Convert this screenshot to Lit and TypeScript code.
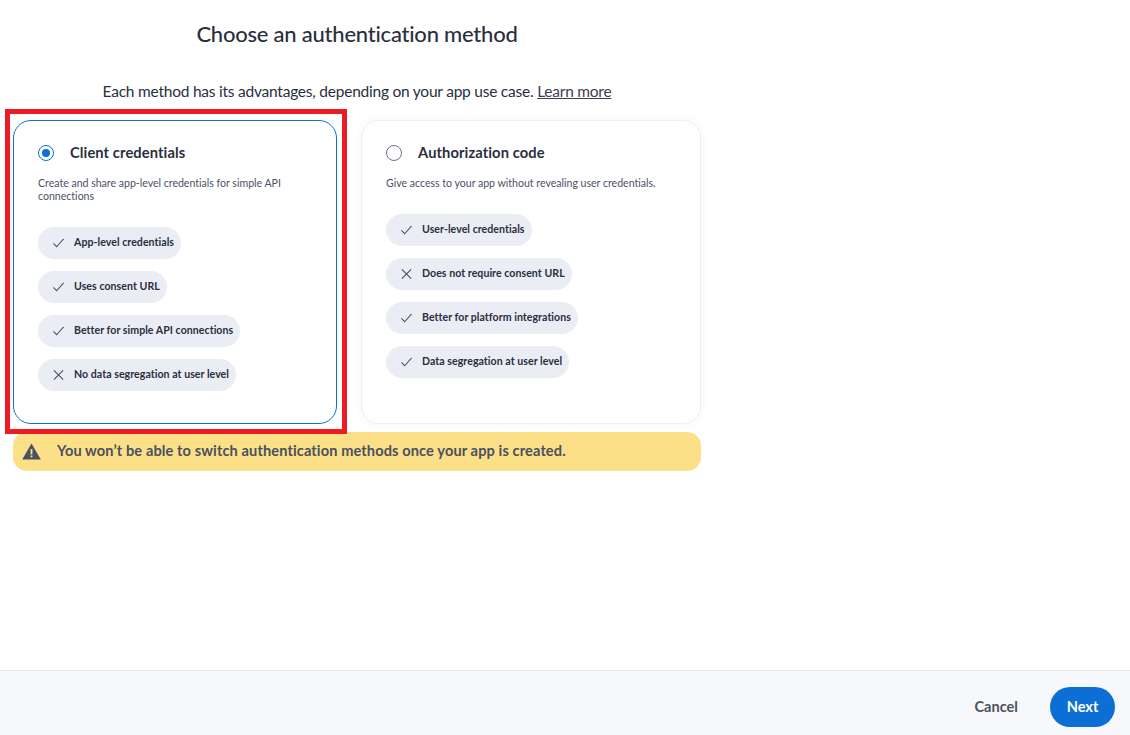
import { LitElement, html, css, svg } from "lit";
import { customElement } from "lit/decorators.js";

type Item = { ok: boolean; text: string };

const check = svg`<path d="M1.5 7.5 L5 11 L12.5 2.5" fill="none" stroke="#4a5163" stroke-width="1.1"/>`;
const cross = svg`<path d="M2 2 L12 12 M12 2 L2 12" fill="none" stroke="#4a5163" stroke-width="1.2"/>`;

@customElement("app-root")
export class AppRoot extends LitElement {
  static styles = css`
    :host {
      display: flex;
      flex-direction: column;
      height: 735px;
      width: 1130px;
      overflow: hidden;
      background: #fff;
      font-family: Lato, "Open Sans", sans-serif;
      color: #2a2f3d;
    }
    .main {
      flex: 1;
      padding-left: 13px;
    }
    .content {
      position: relative;
      width: 688px;
      display: flex;
      flex-direction: column;
    }
    h1 {
      margin: 0;
      padding-top: 20px;
      height: 28px;
      line-height: 28px;
      font-size: 22px;
      font-weight: 500;
      letter-spacing: -0.23px;
      text-align: center;
      color: #2a2f3d;
    }
    .sub {
      margin: 29px 0 0;
      height: 28px;
      line-height: 28px;
      font-size: 15.5px;
      letter-spacing: -0.23px;
      text-align: center;
      color: #2a2f3d;
    }
    .sub a {
      color: #3a4050;
      text-decoration: underline;
    }
    .cards {
      display: flex;
      gap: 24px;
      margin-top: 15px;
    }
    .card {
      box-sizing: border-box;
      height: 304px;
      border-radius: 18px;
      border: 1px solid #eeeef6;
      box-shadow: 0 0 12px rgba(90, 90, 140, 0.05);
      padding: 23px 24px;
      background: #fff;
    }
    .card.left {
      width: 324px;
      border-color: #0b6fd6;
    }
    .card.right {
      width: 340px;
    }
    .head {
      display: flex;
      align-items: center;
      gap: 16px;
      height: 18px;
    }
    .radio {
      box-sizing: border-box;
      width: 16px;
      height: 16px;
      border-radius: 50%;
      border: 1.3px solid #6b7488;
      display: flex;
      align-items: center;
      justify-content: center;
      flex: none;
    }
    .radio.on {
      border-color: #0b6fd6;
    }
    .radio.on::after {
      content: "";
      width: 8px;
      height: 8px;
      border-radius: 50%;
      background: #0b6fd6;
    }
    .name {
      font-size: 14.7px;
      font-weight: 700;
      letter-spacing: 0.1px;
      padding-bottom: 2px;
      color: #2a2f3d;
    }
    .desc {
      margin: 15px 0 0;
      font-size: 10.6px;
      line-height: 13px;
      letter-spacing: -0.02px;
      color: #4c5264;
    }
    .pills {
      display: flex;
      flex-direction: column;
      align-items: flex-start;
      gap: 12px;
      margin-top: 24px;
    }
    .pill {
      display: flex;
      align-items: center;
      gap: 9px;
      height: 32px;
      padding: 0 7px 0 14px;
      border-radius: 16px;
      background: #ebedf5;
      font-size: 10.6px;
      font-weight: 700;
      letter-spacing: 0.04px;
      color: #2a2f3d;
    }
    .pill span {
      padding-bottom: 2px;
    }
    .pill svg {
      width: 13px;
      height: 14px;
      flex: none;
    }
    .banner {
      display: flex;
      align-items: center;
      gap: 16px;
      height: 39px;
      margin-top: 8px;
      padding-left: 9px;
      border-radius: 14px;
      background: #fbe088;
      font-size: 14.6px;
      font-weight: 700;
      letter-spacing: 0.11px;
      color: #4b5060;
    }
    .banner span {
      padding-bottom: 2px;
    }
    .banner svg {
      width: 19px;
      height: 17px;
      flex: none;
    }
    .highlight {
      position: absolute;
      left: -8px;
      top: 109px;
      width: 342px;
      height: 325px;
      box-sizing: border-box;
      border: 5px solid #ed1c24;
      pointer-events: none;
    }
    footer {
      box-sizing: border-box;
      height: 65px;
      border-top: 1px solid #e2e3f0;
      background: #f7f8fb;
      display: flex;
      align-items: flex-start;
      justify-content: flex-end;
      gap: 32px;
      padding: 16px 15px 0 0;
    }
    .btn {
      box-sizing: border-box;
      height: 40px;
      font-family: inherit;
      font-size: 14.6px;
      font-weight: 700;
      border: none;
      background: none;
      padding: 0 0 2px;
      color: #4d5360;
    }
    .btn.primary {
      width: 65px;
      border-radius: 20px;
      background: #0b6fd6;
      color: #fff;
    }
  `;

  private left: Item[] = [
    { ok: true, text: "App-level credentials" },
    { ok: true, text: "Uses consent URL" },
    { ok: true, text: "Better for simple API connections" },
    { ok: false, text: "No data segregation at user level" },
  ];

  private right: Item[] = [
    { ok: true, text: "User-level credentials" },
    { ok: false, text: "Does not require consent URL" },
    { ok: true, text: "Better for platform integrations" },
    { ok: true, text: "Data segregation at user level" },
  ];

  private pills(items: Item[]) {
    return html`<div class="pills">
      ${items.map(
        (i) => html`<div class="pill">
          <svg viewBox="0 0 14 14">${i.ok ? check : cross}</svg>
          <span>${i.text}</span>
        </div>`
      )}
    </div>`;
  }

  render() {
    return html`
      <div class="main">
        <div class="content">
          <h1>Choose an authentication method</h1>
          <p class="sub">Each method has its advantages, depending on your app use case. <a href="#">Learn more</a></p>
          <div class="cards">
            <section class="card left">
              <div class="head"><span class="radio on"></span><span class="name">Client credentials</span></div>
              <p class="desc">Create and share app-level credentials for simple API connections</p>
              ${this.pills(this.left)}
            </section>
            <section class="card right">
              <div class="head"><span class="radio"></span><span class="name">Authorization code</span></div>
              <p class="desc">Give access to your app without revealing user credentials.</p>
              ${this.pills(this.right)}
            </section>
          </div>
          <div class="banner">
            <svg viewBox="0 0 19 17">
              <path d="M9.5 0.5 L18.8 16.5 H0.2 Z" fill="#4b5060"/>
              <rect x="8.6" y="6" width="1.8" height="5.5" fill="#fbe088"/>
              <rect x="8.6" y="12.5" width="1.8" height="1.8" fill="#fbe088"/>
            </svg>
            <span>You won’t be able to switch authentication methods once your app is created.</span>
          </div>
          <div class="highlight"></div>
        </div>
      </div>
      <footer>
        <button class="btn">Cancel</button>
        <button class="btn primary">Next</button>
      </footer>
    `;
  }
}
